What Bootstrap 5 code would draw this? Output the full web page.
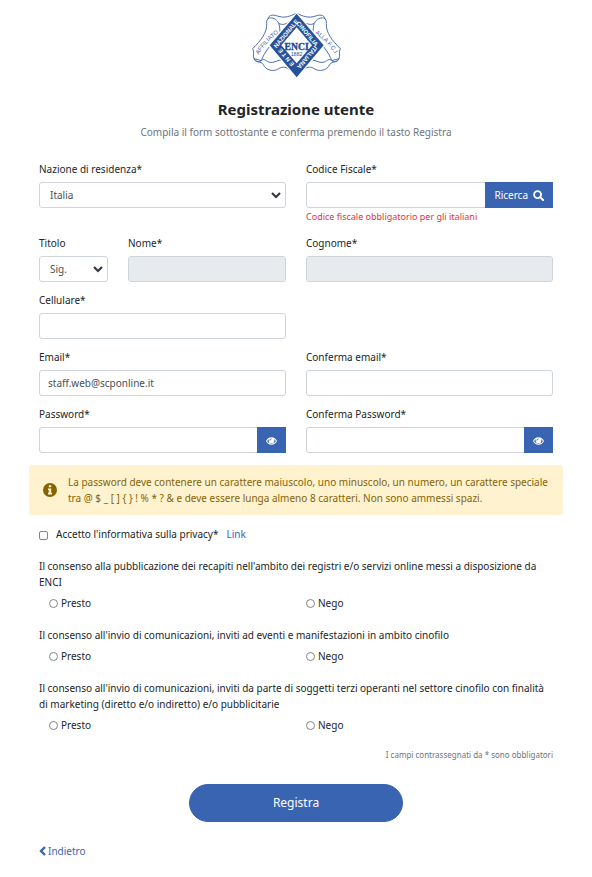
<!DOCTYPE html>
<html lang="it">
<head>
<meta charset="utf-8">
<meta name="viewport" content="width=device-width, initial-scale=1">
<title>Registrazione utente</title>
<link href="https://cdn.jsdelivr.net/npm/bootstrap@5.3.0/dist/css/bootstrap.min.css" rel="stylesheet">
<style>
  :root { --brand: #3964b2; }
  body { font-family: "Noto Sans", "Open Sans", sans-serif; font-size: 10px; line-height: 16px; color: #212529; background: #fff; }
  .page { padding: 8px 39px 16px; }
  .page .row { --bs-gutter-x: 20px; }
  h1 { font-size: 15px; line-height: 22px; font-weight: 700; margin: 16px 0 4px; }
  .intro { color: #6c757d; margin-bottom: 21px; }
  .field { margin-bottom: 10px; }
  .field > label { display: block; margin-bottom: 5px; }
  .form-control, .form-select { height: 26px; font-size: 10px; line-height: 16px; color: #495057; border-color: #ced4da; border-radius: 3px; padding: 4px 8px; }
  .form-control:disabled { background-color: #e7ebee; }
  .form-select { padding-left: 10px; background-size: 12px 12px; background-position: right 3px center;
    background-image: url("data:image/svg+xml,%3Csvg xmlns='http://www.w3.org/2000/svg' viewBox='0 0 12 12'%3E%3Cpath d='M2 4l4 4 4-4' fill='none' stroke='%23343a40' stroke-width='2.2'/%3E%3C/svg%3E"); }
  .btn-brand { --bs-btn-color: #fff; --bs-btn-bg: var(--brand); --bs-btn-border-color: var(--brand); --bs-btn-hover-color: #fff; --bs-btn-hover-bg: #2f5396; --bs-btn-hover-border-color: #2f5396; --bs-btn-active-bg: #2f5396; --bs-btn-active-color: #fff; }
  .input-group .btn { font-size: 10px; line-height: 16px; padding: 4px 8px; border-radius: 0; }
  .ricerca { gap: 5px; }
  .error { font-size: 9px; color: #dc3545; margin-top: 1px; }
  .hint { background: #fff2cf; color: #856404; border-radius: 3px; padding: 9px 14px; margin: 12px -10px 11px; gap: 11px; }
  .form-check-input[type] { flex: none; width: 9px; height: 9px; margin: 0; border: 1px solid #858585; }
  .form-check-input[type=checkbox] { border-radius: 2px; margin-top: 5px; }
  .privacy { gap: 8px; padding-left: 0; margin-bottom: 16px; }
  .consent { margin-bottom: 16px; }
  .consent legend { font-size: 10px; line-height: 16px; margin-bottom: 5px; }
  .choice { gap: 3px; padding-left: 10px; }
  .choice.nego { padding-left: 0; }
  .brand-link { color: var(--brand); text-decoration: none; }
  .note { font-size: 8px; color: #6c757d; margin: -2px 0 21px; }
  .btn-send { width: 40%; min-width: 214px; height: 38px; font-size: 12px; padding: 0; }
  .back { margin-top: 21px; gap: 2px; }
</style>
<script src="https://cdn.jsdelivr.net/npm/bootstrap@5.3.0/dist/js/bootstrap.bundle.min.js"></script>
</head>
<body>
<svg class="d-none" aria-hidden="true">
  <symbol id="eye" viewBox="0 0 24 16"><path fill="currentColor" fill-rule="evenodd" d="M12 0C6.500 0 2.200 3.200 0 8c2.200 4.800 6.500 8 12 8s9.800-3.200 12-8C21.800 3.200 17.500 0 12 0zM12 14C7.800 14 4.400 11.800 2.400 8c1-1.900 2.500-3.500 4.200-4.500C6 4.500 5.800 5.600 5.800 6.800a6.200 6.200 0 0 0 12.400 0c0-1.200-.2-2.300-.8-3.300 1.700 1 3.200 2.600 4.200 4.500-2 3.800-5.400 6-9.600 6zM12 2.500c.5 0 .8.300.8.800s-.3.800-.8.800c-1.500 0-2.700 1.200-2.700 2.700 0 .5-.3.800-.8.800s-.8-.3-.8-.8c0-2.400 1.900-4.300 4.300-4.300z"/></symbol>
</svg>

<main class="page container-fluid">
  <header class="text-center">
    <svg class="d-block mx-auto" width="100" height="74" viewBox="0 0 300 222" role="img" aria-label="ENCI - Ente Nazionale Cinofilia Italiana">
      <defs>
        <g id="ribbon" fill="#fff" stroke="#4a70ae" stroke-width="3" stroke-linejoin="round">
          <path d="M66 38C64 22 78 18 94 24C116 32 134 24 150 16L136 36C122 50 108 52 98 46L92 58C80 56 70 50 66 38Z"/>
          <path d="M62 46C64 74 44 98 20 122C26 132 20 142 24 152L46 158C54 134 76 104 108 82C98 76 104 60 98 46C92 32 78 28 70 30C64 32 61 38 62 46Z"/>
          <path d="M24 152C28 166 46 158 52 170C60 188 84 192 98 182C110 174 122 178 134 186L118 156C100 150 86 168 68 162C58 158 54 150 46 158C38 164 28 160 24 152Z"/>
        </g>
        <path id="arcL" d="M36 144Q56 106 102 72"/>
        <path id="arcR" d="M201 72Q247 102 272 147"/>
      </defs>
      <use href="#ribbon"/>
      <use href="#ribbon" transform="translate(303 0) scale(-1 1)"/>
      <g font-family="Liberation Sans, sans-serif" font-size="18" fill="#3a62a4" text-anchor="middle">
        <text><textPath href="#arcL" startOffset="50%">AFFILIATO</textPath></text>
        <text><textPath href="#arcR" startOffset="50%">ALLA F.C.I.</textPath></text>
      </g>
      <path d="M152 12L238 112L152 212L66 112Z" fill="#fff"/>
      <path d="M152 17L233 112L152 208L71 112Z" fill="#27529b"/>
      <path d="M152 58L198 112L152 166L106 112Z" fill="#fff"/>
      <g font-family="Liberation Sans, sans-serif" font-weight="700" font-size="18" fill="#fff" text-anchor="middle">
        <text transform="translate(125 81) rotate(-50)">NAZIONALE</text>
        <text transform="translate(179 81) rotate(50)">CINOFILIA</text>
        <text transform="translate(179 144) rotate(130)">ITALIANA</text>
        <text transform="translate(125 144) rotate(230)">E N T E</text>
      </g>
      <g font-family="Liberation Serif, serif" fill="#20498f" text-anchor="middle" font-weight="700">
        <text x="152" y="127" font-size="29" stroke="#20498f">ENCI</text>
        <text x="152" y="143" font-family="Liberation Sans, sans-serif" font-size="15" font-weight="400">1882</text>
      </g>
    </svg>
    <h1>Registrazione utente</h1>
    <p class="intro">Compila il form sottostante e conferma premendo il tasto Registra</p>
  </header>

  <form onsubmit="return false">
    <div class="row">
      <div class="col-6 field">
        <label for="nazione">Nazione di residenza*</label>
        <select id="nazione" class="form-select"><option>Italia</option></select>
      </div>
      <div class="col-6 field">
        <label for="cf">Codice Fiscale*</label>
        <div class="input-group">
          <input id="cf" type="text" class="form-control">
          <button type="button" class="btn btn-brand ricerca d-flex align-items-center">Ricerca
            <svg width="11" height="11" viewBox="0 0 12 12" fill="none" stroke="currentColor" stroke-width="2" aria-hidden="true"><circle cx="5" cy="5" r="3.800"/><path d="M7.800 7.800L11 11" stroke-linecap="round" stroke-width="2.200"/></svg>
          </button>
        </div>
        <div class="error">Codice fiscale obbligatorio per gli italiani</div>
      </div>
    </div>
    <div class="row">
      <div class="col-2 field">
        <label for="titolo">Titolo</label>
        <select id="titolo" class="form-select"><option>Sig.</option></select>
      </div>
      <div class="col-4 field">
        <label for="nome">Nome*</label>
        <input id="nome" type="text" class="form-control" disabled>
      </div>
      <div class="col-6 field">
        <label for="cognome">Cognome*</label>
        <input id="cognome" type="text" class="form-control" disabled>
      </div>
    </div>
    <div class="row">
      <div class="col-6 field">
        <label for="cell">Cellulare*</label>
        <input id="cell" type="tel" class="form-control">
      </div>
    </div>
    <div class="row">
      <div class="col-6 field">
        <label for="email">Email*</label>
        <input id="email" type="email" class="form-control" value="staff.web@scponline.it">
      </div>
      <div class="col-6 field">
        <label for="email2">Conferma email*</label>
        <input id="email2" type="email" class="form-control">
      </div>
    </div>
    <div class="row">
      <div class="col-6">
        <div class="field mb-0">
          <label for="pw">Password*</label>
          <div class="input-group">
            <input id="pw" type="password" class="form-control">
            <button type="button" class="btn btn-brand" aria-label="Mostra password"><svg width="11" height="8"><use href="#eye"/></svg></button>
          </div>
        </div>
      </div>
      <div class="col-6">
        <div class="field mb-0">
          <label for="pw2">Conferma Password*</label>
          <div class="input-group">
            <input id="pw2" type="password" class="form-control">
            <button type="button" class="btn btn-brand" aria-label="Mostra password"><svg width="11" height="8"><use href="#eye"/></svg></button>
          </div>
        </div>
      </div>
    </div>

    <div class="hint d-flex align-items-center">
      <svg class="flex-shrink-0" width="14" height="14" viewBox="0 0 14 14" aria-hidden="true"><circle cx="7" cy="7" r="7" fill="#856404"/><path fill="#fff2cf" d="M5.800 2.200h2.400v2H5.800zM5 5.400h3.200v4.400H9v1.600H5V9.800h.8V7H5z"/></svg>
      <div>La password deve contenere un carattere maiuscolo, uno minuscolo, un numero, un carattere speciale tra @ $ _ [ ] { } ! % * ? &amp; e deve essere lunga almeno 8 caratteri. Non sono ammessi spazi.</div>
    </div>

    <div class="privacy d-flex">
      <input id="privacy" type="checkbox" class="form-check-input">
      <label for="privacy">Accetto l'informativa sulla privacy*</label>
      <a href="#" class="brand-link">Link</a>
    </div>

    <fieldset class="consent">
      <legend>Il consenso alla pubblicazione dei recapiti nell'ambito dei registri e/o servizi online messi a disposizione da ENCI</legend>
      <div class="row">
        <div class="col-6"><div class="choice d-flex align-items-center"><input class="form-check-input" type="radio" name="c1" id="c1p"><label for="c1p">Presto</label></div></div>
        <div class="col-6"><div class="choice nego d-flex align-items-center"><input class="form-check-input" type="radio" name="c1" id="c1n"><label for="c1n">Nego</label></div></div>
      </div>
    </fieldset>
    <fieldset class="consent">
      <legend>Il consenso all'invio di comunicazioni, inviti ad eventi e manifestazioni in ambito cinofilo</legend>
      <div class="row">
        <div class="col-6"><div class="choice d-flex align-items-center"><input class="form-check-input" type="radio" name="c2" id="c2p"><label for="c2p">Presto</label></div></div>
        <div class="col-6"><div class="choice nego d-flex align-items-center"><input class="form-check-input" type="radio" name="c2" id="c2n"><label for="c2n">Nego</label></div></div>
      </div>
    </fieldset>
    <fieldset class="consent">
      <legend>Il consenso all'invio di comunicazioni, inviti da parte di soggetti terzi operanti nel settore cinofilo con finalità di marketing (diretto e/o indiretto) e/o pubblicitarie</legend>
      <div class="row">
        <div class="col-6"><div class="choice d-flex align-items-center"><input class="form-check-input" type="radio" name="c3" id="c3p"><label for="c3p">Presto</label></div></div>
        <div class="col-6"><div class="choice nego d-flex align-items-center"><input class="form-check-input" type="radio" name="c3" id="c3n"><label for="c3n">Nego</label></div></div>
      </div>
    </fieldset>

    <p class="note text-end">I campi contrassegnati da * sono obbligatori</p>
    <div class="text-center"><button type="submit" class="btn btn-brand btn-send rounded-pill">Registra</button></div>
  </form>

  <a href="#" class="brand-link back d-inline-flex align-items-center">
    <svg width="7" height="10" viewBox="0 0 7 10" fill="none" stroke="currentColor" stroke-width="2.400" aria-hidden="true"><path d="M6 1L2 5l4 4"/></svg>Indietro</a>
</main>
</body>
</html>
